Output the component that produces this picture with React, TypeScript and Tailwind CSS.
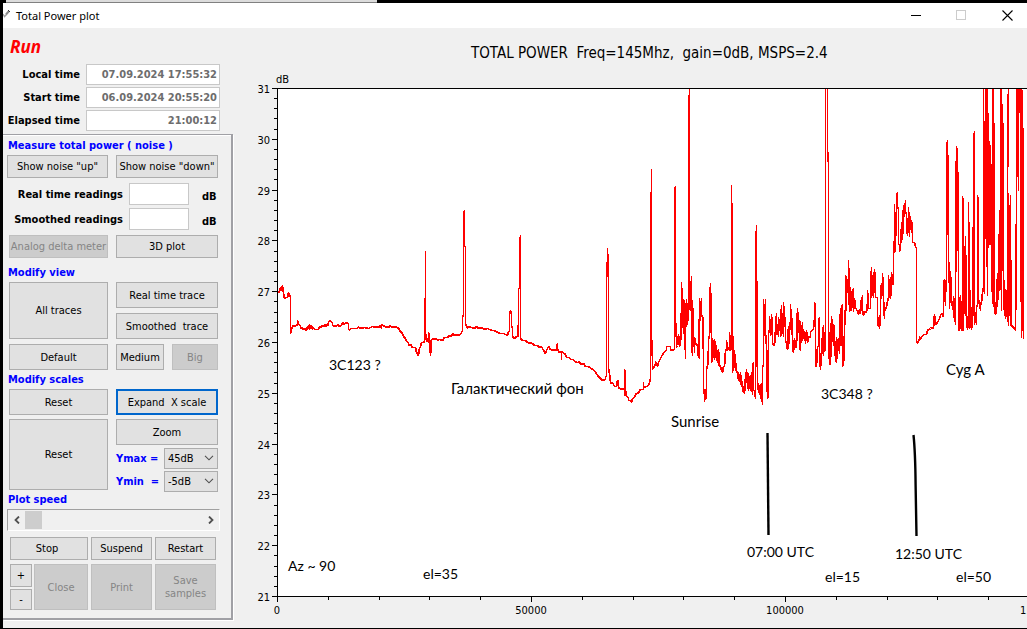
import React from 'react';

type ButtonProps = {
  children: React.ReactNode;
  className?: string;
  disabled?: boolean;
  focused?: boolean;
};

function PushButton({ children, className = '', disabled, focused }: ButtonProps) {
  const tone = disabled
    ? 'border border-[#bfbfbf] bg-[#cccccc] text-[#858585]'
    : focused
      ? 'border-2 border-[#0066cc] bg-[#e1e1e1] text-black'
      : 'border border-[#adadad] bg-[#e1e1e1] text-black';
  return (
    <button
      type="button"
      disabled={disabled}
      className={`flex items-center justify-center whitespace-pre text-center leading-[13px] ${tone} ${className}`}
    >
      {children}
    </button>
  );
}

function TimeRow({ id, label, value }: { id: string; label: string; value: string }) {
  return (
    <div className="flex h-[21px] items-center">
      <label htmlFor={id} className="w-[77px] text-right font-bold">
        {label}
      </label>
      <input
        id={id}
        readOnly
        value={value}
        className="ml-[6px] h-[21px] w-[134px] border border-[#c8c8c8] bg-white pr-[2px] text-right font-bold text-[#6d6d6d] outline-none"
      />
    </div>
  );
}

function ReadingRow({ id, label }: { id: string; label: string }) {
  return (
    <div className="flex h-[22px] items-center">
      <label htmlFor={id} className="w-[120px] text-right font-bold">
        {label}
      </label>
      <input
        id={id}
        className="ml-[6px] h-[22px] w-[60px] border border-[#c8c8c8] bg-white px-1 outline-none"
      />
      <span className="ml-[13px] pt-1 font-bold">dB</span>
    </div>
  );
}

function ScaleSelect({ id, label, value }: { id: string; label: string; value: string }) {
  return (
    <div className="flex h-[21px] items-center justify-between">
      <label htmlFor={id} className="whitespace-pre font-bold text-[#0000ff]">
        {label}
      </label>
      <div className="relative">
        <select
          id={id}
          defaultValue={value}
          className="block h-[21px] w-[54px] appearance-none border border-[#adadad] bg-[#e1e1e1] pl-[3px] outline-none"
        >
          <option>{value}</option>
        </select>
        <svg className="pointer-events-none absolute right-1 top-[7px] h-[6px] w-[10px]" viewBox="0 0 10 6">
          <path d="M1 .8 5 4.8 9 .8" fill="none" stroke="#505050" strokeWidth="1.1" />
        </svg>
      </div>
    </div>
  );
}

function Heading({ children, className = 'h-[19px]' }: { children: React.ReactNode; className?: string }) {
  return (
    <h2 className={`flex items-center pl-[5px] font-bold text-[#0000ff] ${className}`}>{children}</h2>
  );
}

function ControlPanel() {
  return (
    <aside className="w-[230px] shrink-0 pb-2">
      <div className="flex h-9 items-center pl-[7px] font-['Noto_Sans','Open_Sans',sans-serif] text-[17px] font-bold italic text-[#ff0000]">
        Run
      </div>
      <div className="flex flex-col gap-[2px]">
        <TimeRow id="local" label="Local time" value="07.09.2024 17:55:32" />
        <TimeRow id="start" label="Start time" value="06.09.2024 20:55:20" />
        <TimeRow id="elapsed" label="Elapsed time" value="21:00:12" />
      </div>

      <section className="mt-[3px] border-b-2 border-r-2 border-t border-[#a0a0a5] pb-2 shadow-[1px_1px_0_#ffffff,inset_0_1px_0_#ffffff]">
        <Heading className="h-[20px]">Measure total power ( noise )</Heading>
        <div className="flex gap-2 pl-1">
          <PushButton className="h-[23px] w-[101px]">Show noise "up"</PushButton>
          <PushButton className="h-[23px] w-[102px]">Show noise "down"</PushButton>
        </div>
        <div className="mt-[5px] flex flex-col gap-[3px]">
          <ReadingRow id="realtime" label="Real time readings" />
          <ReadingRow id="smoothed" label="Smoothed readings" />
        </div>

        <div className="mt-[5px] grid grid-cols-[99px_102px] gap-x-2 pl-[6px]">
          <PushButton className="h-[23px]" disabled>
            Analog delta meter
          </PushButton>
          <PushButton className="h-[23px]">3D plot</PushButton>
        </div>
        <Heading className="h-[24px] pt-1">Modify view</Heading>
        <div className="grid grid-cols-[99px_102px] gap-x-2 gap-y-[5px] pl-[6px]">
          <PushButton className="row-span-2 h-[57px]">All traces</PushButton>
          <PushButton className="h-[26px]">Real time trace</PushButton>
          <PushButton className="h-[26px]">{'Smoothed  trace'}</PushButton>
          <PushButton className="h-[26px]">Default</PushButton>
          <div className="flex justify-between">
            <PushButton className="w-[48px]">Medium</PushButton>
            <PushButton className="w-[46px]" disabled>
              Big
            </PushButton>
          </div>
        </div>
        <Heading>Modify scales</Heading>
        <div className="grid grid-cols-[99px_102px] gap-x-2 gap-y-1 pl-[6px]">
          <PushButton className="h-[26px]">Reset</PushButton>
          <PushButton className="h-[26px]" focused>
            {'Expand  X scale'}
          </PushButton>
          <PushButton className="h-[71px]">Reset</PushButton>
          <div className="flex h-[73px] flex-col gap-[2px]">
            <PushButton className="mb-px h-[26px]">Zoom</PushButton>
            <ScaleSelect id="ymax" label="Ymax =" value="45dB" />
            <ScaleSelect id="ymin" label="Ymin  =" value="-5dB" />
          </div>
        </div>
        <Heading className="h-[17px] pb-[2px]">Plot speed</Heading>
        <div className="ml-1 flex h-[22px] w-[213px] border border-b-white border-l-[#a0a0a0] border-r-white border-t-[#a0a0a0] bg-[#f0f0f0]">
          <button type="button" aria-label="Slower" className="flex w-[17px] items-center justify-center">
            <svg viewBox="0 0 8 8" className="h-2 w-2">
              <path d="M6 .5 2.5 4 6 7.5" fill="none" stroke="#505050" strokeWidth="1.8" />
            </svg>
          </button>
          <input
            type="range"
            aria-label="Plot speed"
            defaultValue={0}
            className="h-5 min-w-0 flex-1 appearance-none bg-transparent [&::-webkit-slider-thumb]:h-[18px] [&::-webkit-slider-thumb]:w-[17px] [&::-webkit-slider-thumb]:appearance-none [&::-webkit-slider-thumb]:bg-[#cdcdcd]"
          />
          <button type="button" aria-label="Faster" className="flex w-[17px] items-center justify-center">
            <svg viewBox="0 0 8 8" className="h-2 w-2">
              <path d="M2 .5 5.5 4 2 7.5" fill="none" stroke="#505050" strokeWidth="1.8" />
            </svg>
          </button>
        </div>
        <div className="mt-[6px] grid grid-cols-[78px_61px_61px] gap-x-[3px] gap-y-1 pl-[7px]">
          <PushButton className="h-[23px] pr-1">Stop</PushButton>
          <PushButton className="h-[23px]">Suspend</PushButton>
          <PushButton className="h-[23px]">Restart</PushButton>
          <div className="flex gap-[2px]">
            <div className="flex w-[22px] flex-col justify-between">
              <PushButton className="h-[23px]">+</PushButton>
              <PushButton className="h-[21px]">-</PushButton>
            </div>
            <PushButton className="h-[46px] flex-1" disabled>
              Close
            </PushButton>
          </div>
          <PushButton className="h-[46px]" disabled>
            Print
          </PushButton>
          <PushButton className="h-[46px]" disabled>
            {'Save\nsamples'}
          </PushButton>
        </div>
      </section>
    </aside>
  );
}

const TRACE = `277,291 278,292 279,291 280,287 281,290 281,286 282,291 282,285 283,293 284,298 286,297 287,297
288,292 289,295 290,296 290,333 291,331 291,327 292,328 292,325 295,326 296,324 297,325 297,320 298,324 300,325 300,328 302,327
302,329 305,328 305,330 307,327 307,329 308,325 309,329 309,324 310,328 311,325 312,329 313,327 314,329 318,329 319,326 321,327 321,325
324,326 324,324 326,326 327,323 328,325 328,321 330,320 331,322 332,322 332,325 336,326 337,324 339,326 341,325 342,322 344,324
345,322 348,323 348,328 349,330 350,328 357,328 358,326 359,328 364,327 368,328 372,326 378,327 380,325 381,328 381,324 384,326
388,327 390,325 391,327 395,326 398,328 400,331 402,333 403,336 405,338 406,341 408,342 408,345 410,344 412,347 415,347 416,352
417,353 417,355 418,355 419,348 420,346 421,342 423,342 424,341 424,298 425,298 425,250 425,332 426,341 427,338 428,342 428,332
429,337 430,355 431,339 436,338 437,340 439,339 442,340 444,337 447,337 449,335 451,336 452,333 454,335 460,334 462,330 462,316
463,315 463,213 464,210 464,246 465,246 465,324 466,325 467,328 468,326 474,328 476,326 478,328 481,327 484,329 487,328 489,329
492,330 494,330 497,332 500,333 503,333 507,335 508,331 509,331 509,313 510,310 511,314 511,325 512,328 512,336 514,338 516,336
517,336 517,325 518,336 518,288 519,288 519,243 520,235 520,338 522,340 525,340 527,342 532,343 534,345 537,345 539,347 541,346
543,350 545,353 546,350 548,346 550,349 556,350 557,343 557,349 559,352 561,351 561,359 561,351 565,354 566,357 569,357 570,359
573,359 574,361 577,362 579,361 580,364 583,363 585,366 588,366 592,369 594,370 597,375 600,378 602,380 605,379 605,377 606,375
606,262 607,262 607,248 608,280 608,368 609,373 610,382 611,383 612,382 614,386 616,386 617,380 618,380 618,387 619,388 623,389
624,387 624,368 624,395 625,394 625,369 625,390 626,396 628,397 628,400 630,400 631,402 632,398 634,397 635,394 638,392 640,389
643,389 643,381 643,387 646,386 648,385 649,382 650,378 650,192 651,192 651,168 651,355 652,340 652,369 653,367 655,364 655,361
657,366 658,362 660,358 661,356 664,351 666,350 666,346 668,346 670,346 670,350 672,349 673,350 674,348 674,192 675,186 675,320
676,339 676,347 677,345 678,334 679,346 680,338 680,345 681,308 681,282 682,318 682,292 683,333 683,309 684,329 684,300 685,358
685,303 686,326 686,299 687,324 687,310 688,320 688,136 689,88 689,307 690,310 691,276 691,352 692,309 692,355 692,300 693,346 694,337
694,352 694,337 695,343 697,345 698,357 698,319 699,358 699,318 699,298 700,320 701,298 701,315 702,315 702,348 703,317 703,387
704,395 704,401 705,389 706,398 706,366 707,368 708,348 708,336 709,338 709,310 710,283 711,341 711,362 712,338 712,361 713,340
714,359 714,339 715,350 715,342 716,360 717,350 718,365 718,349 719,365 720,366 721,370 722,372 723,366 724,366 725,350 726,349 726,340
727,350 728,347 729,350 729,332 730,350 731,348 731,184 731,345 732,203 732,372 733,336 733,370 734,350 735,370 735,361 736,372
737,371 738,380 738,372 739,381 740,372 741,386 742,381 742,391 743,386 744,393 745,376 745,385 746,369 747,383 747,379 748,390
748,373 749,388 750,380 750,390 751,372 752,394 752,368 753,362 753,390 754,390 755,398 755,269 756,225 756,366 757,281 757,389
758,383 759,394 760,384 760,398 761,383 762,404 762,365 763,366 763,299 764,335 765,299 765,332 766,345 766,391 767,350 767,398
768,396 768,330 769,330 769,316 770,335 770,320 771,334 771,314 772,328 772,343 774,345 775,330 776,313 776,334 777,324 778,336
778,317 779,330 780,317 780,336 781,305 781,335 782,313 783,336 783,302 784,326 784,315 785,326 785,340 786,343 787,349 788,326 788,348
789,322 790,326 790,304 791,334 792,318 792,347 793,352 794,338 795,347 796,341 796,347 797,308 798,332 799,320 799,348 800,350
800,321 801,342 802,322 802,340 803,329 804,339 805,340 805,343 806,330 807,342 808,340 808,337 809,336 810,337 810,331 812,330
813,328 814,318 814,302 815,306 815,366 816,366 817,346 818,346 818,322 819,317 819,350 820,369 821,350 821,357 822,335 823,325 823,355
824,332 824,348 825,345 825,327 825,350 825,88`.trim();

const TRACE_B = `827,88 827,161 828,152 828,326 829,363 830,364 831,316 832,340 832,319 833,345 834,325 834,355 835,343 835,361 836,337 836,362
837,339 838,350 838,338 839,353 840,308 841,345 841,308 842,304 842,366 843,336 843,365 844,340 844,310 845,324 845,275 846,310
846,276 847,292 848,283 848,260 849,311 849,284 850,310 850,287 851,310 852,295 853,288 853,311 854,298 855,307 857,311 858,314
859,309 860,313 861,297 861,310 862,295 862,310 863,315 864,311 866,312 867,302 867,290 868,308 870,308 870,292 871,267 871,297
872,290 873,272 873,297 874,269 875,284 875,297 877,297 877,325 878,317 879,328 880,312 880,285 881,298 882,280 882,273 883,298
884,318 884,311 886,306 887,301 888,297 888,275 889,297 890,277 890,298 891,283 891,272 892,284 893,283 893,241 894,252 894,204
895,251 895,235 896,234 896,199 897,192 897,208 898,207 898,243 899,245 899,251 900,245 900,229 901,242 902,219 902,239 903,205
904,216 905,200 905,212 906,213 906,233 907,218 907,235 908,222 908,207 909,236 909,216 910,217 911,232 911,220 912,231 912,242
914,242 915,246 916,248 916,341 917,343 918,340 919,339 919,336 920,339 922,335 924,334 926,334 927,330 930,328 931,327 933,328
934,314 935,324 936,323 937,322 938,320 939,318 940,315 941,313 943,316 943,284 944,279 945,305 945,280 946,291 946,151 947,140
947,234 948,155 948,282 949,262 949,308 950,271 951,305 951,300 953,310 953,296 954,321 954,298 955,324 955,263 956,146 956,271
957,148 957,243 958,172 958,330 958,296 959,330 959,297 960,328 960,295 961,330 962,330 962,196 963,203 963,330 963,274 964,313
965,236 965,240 966,327 966,313 967,329 968,320 968,202 969,328 970,290 970,327 971,307 971,329 972,322 972,227 973,315 973,145
974,131 974,324 975,312 976,324 976,306 977,305 977,195 978,203 978,303 979,300 980,310 980,305 981,302 982,292 982,288 983,291
983,88 983,88 984,293 984,202 985,238 985,88 986,230 986,88 987,295 987,88 988,247 988,139 989,244 989,141 990,243 990,145
991,260 991,217 992,303 992,88 993,306 993,88 994,310 995,314 996,300 996,313 997,273 998,299 999,224 999,290 999,210 1000,289
1000,88 1001,310 1001,88 1002,190 1002,122 1003,295 1003,122 1003,273 1004,315 1005,289 1005,318 1006,290 1007,321 1007,131
1008,88 1008,160 1007,168 1008,325 1009,268 1009,268 1010,195 1010,325 1011,260 1011,325 1012,326 1013,327 1014,328 1015,330
1016,208 1016,88 1017,100 1017,88 1018,190 1018,88 1019,112 1019,88 1020,114 1020,88 1021,337 1021,88 1022,330 1022,90 1023,331 1023,338`.trim();

const WORDS = [
  { x: 451, y: 394, text: 'Галактический фон' },
  { x: 671, y: 427, text: 'Sunrise' },
  { x: 946, y: 375, text: 'Cyg A' },
];

const FIGURES = [
  { x: 329, y: 370, text: '3C123 ?' },
  { x: 821, y: 399, text: '3C348 ?' },
  { x: 747, y: 557, text: '07:00 UTC' },
  { x: 895, y: 559, text: '12:50 UTC' },
  { x: 825, y: 582, text: 'el=15' },
  { x: 956, y: 582, text: 'el=50' },
  { x: 288, y: 571, text: 'Az ~ 90' },
  { x: 423, y: 579, text: 'el=35' },
];

const X0 = 277;
const Y0 = 88;
const Y1 = 596;

function Annotations({ items, size }: { items: typeof WORDS; size: number }) {
  return (
    <g className="font-['Lato',sans-serif]" fontSize={size} fill="#000000">
      {items.map((a) => (
        <text key={a.text} x={a.x} y={a.y}>
          {a.text}
        </text>
      ))}
    </g>
  );
}

function PowerChart() {
  const yTicks = Array.from({ length: 51 }, (_, i) => ({
    y: Math.round(Y0 + (i * (Y1 - Y0)) / 50),
    major: i % 5 === 0,
    label: 31 - i / 5,
  }));
  const xTicks = Array.from({ length: 16 }, (_, i) => ({
    x: Math.round(X0 + i * 50.8),
    major: i % 5 === 0,
    label: i * 10000,
  }));
  return (
    <svg viewBox="233 28 794 600" className="block h-auto w-full" role="img" aria-label="Total power plot">
      <text x="471" y="58" fontSize="15" className="whitespace-pre">
        {'TOTAL POWER  Freq=145Mhz,  gain=0dB, MSPS=2.4'}
      </text>
      <rect x={X0} y={Y0} width="760" height={Y1 - Y0} fill="#ffffff" />
      <g shapeRendering="crispEdges">
        <g transform="translate(.5 .5)" fill="none" stroke="#ff0000" strokeWidth="1.7" strokeLinejoin="bevel" strokeLinecap="butt">
          <polyline points={TRACE} />
          <polyline points={TRACE_B} />
        </g>
        <g fill="#000000">
          <rect x={X0} y={Y0} width="760" height="1" />
          <rect x={X0} y={Y1} width="760" height="1" />
          <rect x={X0} y={Y0} width="1" height={Y1 - Y0 + 1} />
          {yTicks.map((t) => (
            <rect key={t.y} x={t.major ? 272 : 274} y={t.y} width={t.major ? 5 : 3} height="1" />
          ))}
          {xTicks.map((t) => (
            <rect key={t.x} x={t.x} y={Y1} width="1" height={t.major ? 6 : 4} />
          ))}
        </g>
      </g>
      <g fontSize="11" fill="#000000">
        <text x="276" y="83">dB</text>
        {yTicks
          .filter((t) => t.major)
          .map((t) => (
            <text key={t.y} x="270" y={t.y + 5} textAnchor="end">
              {t.label}
            </text>
          ))}
        {xTicks
          .filter((t) => t.major)
          .map((t) => (
            <text key={t.x} x={t.x} y="614" textAnchor="middle">
              {t.label}
            </text>
          ))}
      </g>
      <g fill="none" stroke="#000000" strokeWidth="2.4">
        <path d="M767.5 433 768.5 535" />
        <path d="M913.5 435Q915.3 452 915.6 485L916.5 536" />
      </g>
      <Annotations items={WORDS} size={15} />
      <Annotations items={FIGURES} size={14} />
    </svg>
  );
}

function TitleBar() {
  return (
    <header className="flex h-[25px] items-center bg-white text-black">
      <svg viewBox="0 0 8 12" className="h-3 w-2" aria-hidden="true">
        <path d="M0 4 1.5 6.5 3.5 4.5" fill="none" stroke="#a0a0a0" strokeWidth="1.4" />
        <path d="M3 4.5 6 1" fill="none" stroke="#8a8a8a" strokeWidth="2" />
        <path d="M5 0 7 2" fill="none" stroke="#3a3a3a" strokeWidth="1" />
      </svg>
      <h1 className="flex-1 pl-[5px] font-['Noto_Sans','Open_Sans',sans-serif] text-[11px] leading-4">Total Power plot</h1>
      <div className="flex h-full">
        <button type="button" aria-label="Minimize" className="flex w-[38px] items-center justify-center">
          <svg viewBox="0 0 11 11" className="h-[11px] w-[11px]" shapeRendering="crispEdges">
            <path d="M0 5.5H10" stroke="#000000" />
          </svg>
        </button>
        <button type="button" aria-label="Maximize" disabled className="flex w-[52px] items-center justify-center">
          <svg viewBox="0 0 11 11" className="h-[11px] w-[11px]" shapeRendering="crispEdges">
            <path d="M.5.5H9.5V9.5H.5Z" fill="none" stroke="#cccccc" />
          </svg>
        </button>
        <button type="button" aria-label="Close window" className="flex w-10 items-center justify-center">
          <svg viewBox="0 0 11 11" className="h-[11px] w-[11px]">
            <path d="M.5.5 10.5 10.5M10.5.5.5 10.5" stroke="#000000" strokeWidth="1.1" />
          </svg>
        </button>
      </div>
    </header>
  );
}

export default function App() {
  return (
    <div className="flex min-h-screen flex-col overflow-hidden bg-black pb-px font-['DejaVu_Sans_Condensed','DejaVu_Sans',sans-serif] text-[11px] leading-[13px]">
      <div className="flex h-[3px] pl-[6px]">
        <div className="h-full w-[371px] border-b border-[#808080] bg-[#dcdcdc]" />
      </div>
      <div className="ml-[3px] flex flex-1 flex-col bg-[#f0f0f0]">
        <TitleBar />
        <main className="flex flex-1 items-start">
          <ControlPanel />
          <div className="min-w-0 flex-1">
            <PowerChart />
          </div>
        </main>
      </div>
    </div>
  );
}
